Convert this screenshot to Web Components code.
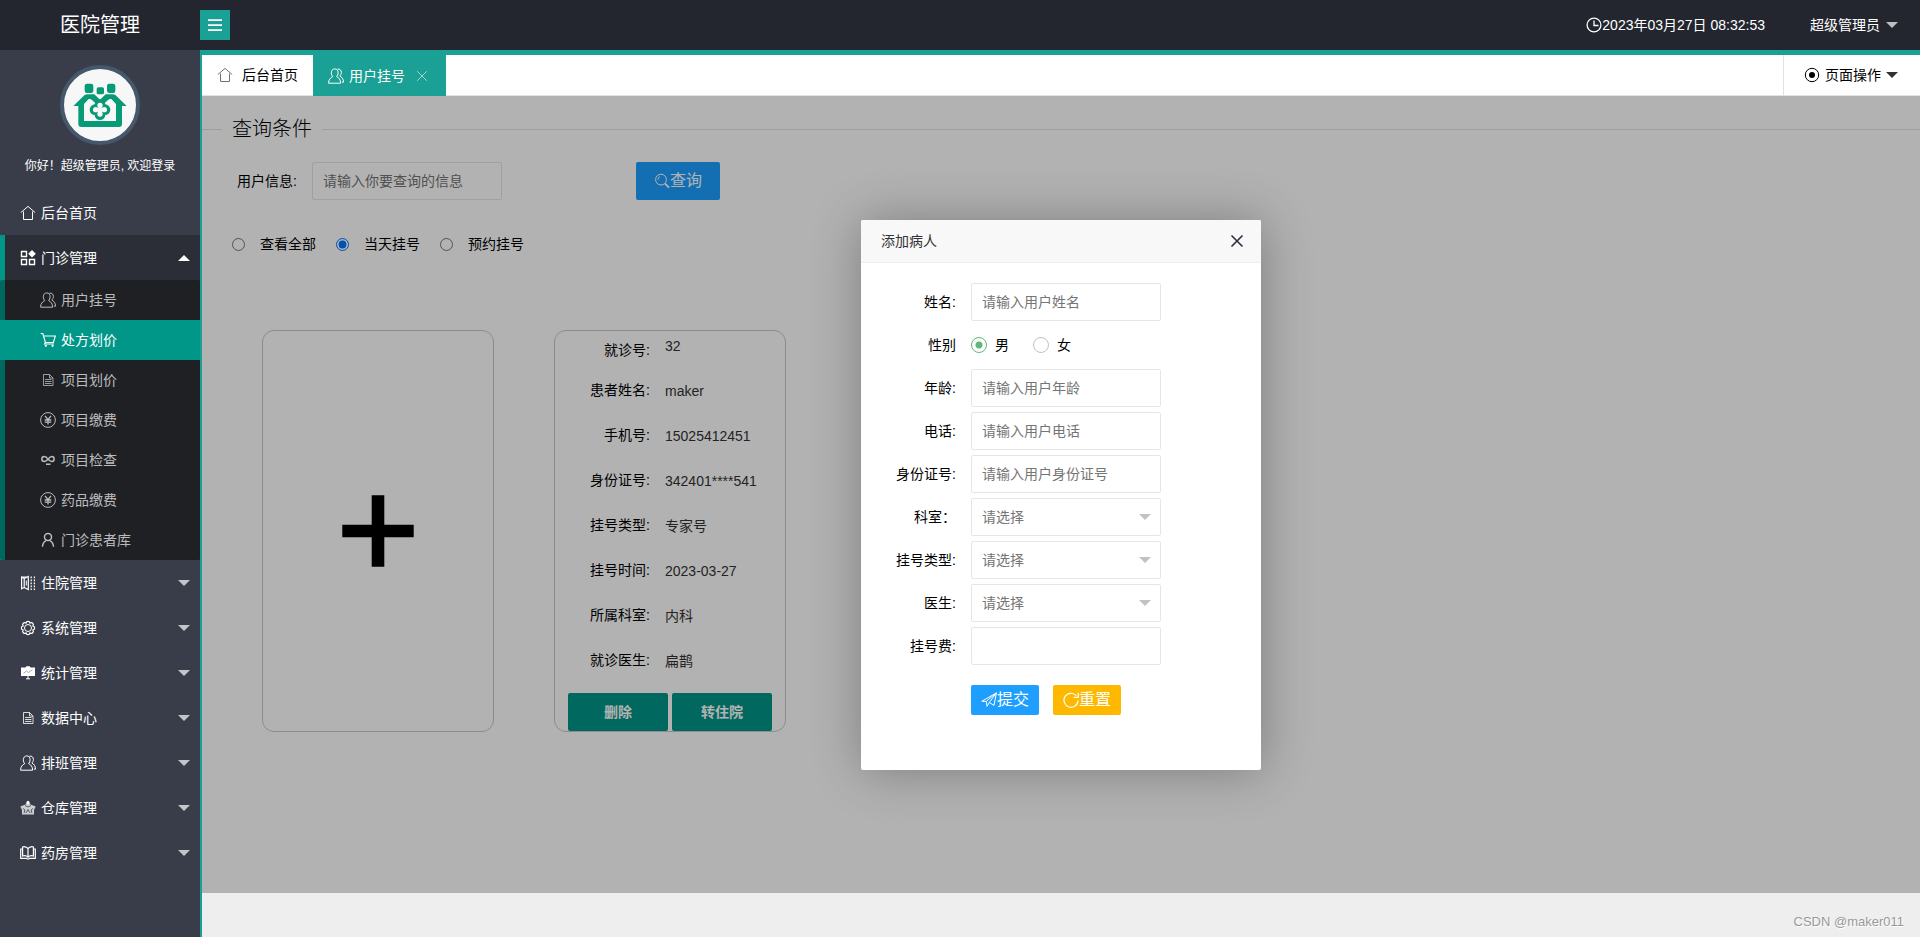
<!DOCTYPE html>
<html lang="zh-CN">
<head>
<meta charset="utf-8">
<title>医院管理</title>
<style>
  body {
    margin: 0;
    font: 14px/20px "Liberation Sans", "Noto Sans CJK SC", sans-serif;
    color: #000;
    background: #eee;
  }
</style>
</head>
<body>
<app-shell>
  <app-header slot="header"></app-header>
  <side-nav slot="nav">
    <nav-item icon="home" label="后台首页" leaf></nav-item>
    <nav-item icon="apps" label="门诊管理" open>
      <nav-link icon="users" label="用户挂号"></nav-link>
      <nav-link icon="cart" label="处方划价" current></nav-link>
      <nav-link icon="doc" label="项目划价"></nav-link>
      <nav-link icon="yen" label="项目缴费"></nav-link>
      <nav-link icon="infinity" label="项目检查"></nav-link>
      <nav-link icon="yen" label="药品缴费"></nav-link>
      <nav-link icon="user" label="门诊患者库"></nav-link>
    </nav-item>
    <nav-item icon="ward" label="住院管理"></nav-item>
    <nav-item icon="gear" label="系统管理"></nav-item>
    <nav-item icon="board" label="统计管理"></nav-item>
    <nav-item icon="doc" label="数据中心"></nav-item>
    <nav-item icon="users" label="排班管理"></nav-item>
    <nav-item icon="store" label="仓库管理"></nav-item>
    <nav-item icon="book" label="药房管理"></nav-item>
  </side-nav>
  <tab-bar slot="tabs"></tab-bar>
  <register-page>
    <add-card></add-card>
    <patient-card></patient-card>
    <modal-dialog slot="dialog" heading="添加病人">
      <form-field label="姓名:" placeholder="请输入用户姓名"></form-field>
      <gender-field></gender-field>
      <form-field label="年龄:" placeholder="请输入用户年龄"></form-field>
      <form-field label="电话:" placeholder="请输入用户电话"></form-field>
      <form-field label="身份证号:" placeholder="请输入用户身份证号"></form-field>
      <form-field label="科室：" kind="select"></form-field>
      <form-field label="挂号类型:" kind="select"></form-field>
      <form-field label="医生:" kind="select"></form-field>
      <form-field label="挂号费:"></form-field>
      <color-button slot="actions" icon="send" tone="blue" small>提交</color-button>
      <color-button slot="actions" icon="refresh" tone="amber" small>重置</color-button>
    </modal-dialog>
  </register-page>
</app-shell>

<script>
const define = (name, render, after) => customElements.define(name, class extends HTMLElement {
  connectedCallback() {
    if (this.shadowRoot) return;
    const root = this.attachShadow({ mode: 'open' });
    root.innerHTML = '<style>:host,*{box-sizing:border-box}</style>' + render(this);
    if (after) after(root, this);
  }
});

const ICONS = {
  home: '<path d="M.8 7.600 8 1.400l7.200 6.200M3.500 6.500V14.500H12.500V6.500"/>',
  apps: '<path d="M1.500 1.500h5v5h-5zM1.500 9.500h5v5h-5zM9.500 9.500h5v5h-5z" stroke-width="1.400"/><path d="M12 0l3.800 3.800L12 7.600 8.200 3.800z" fill="currentColor" stroke="none"/>',
  users: '<path d="M6.800.9C4.600.9 3.300 2.700 3.300 4.800c0 1.600.6 2.900 1.500 3.800C2.400 9.700.6 11.700.6 15.200H12.600c0-3.500-1.600-5.500-4-6.600.9-.9 1.500-2.200 1.500-3.800C10.100 2.700 9 .9 6.800.9z"/><path d="M9.400 1.200c2.500-.6 4 1.100 4 3.300 0 1.500-.7 2.700-1.600 3.500 2.300 1.200 3.600 3 3.700 6.200h-1.600"/>',
  cart: '<path d="M.6 1.500h2.200L5.400 10.500h8L15.300 4H3.700M5.400 10.500l-.8 1.500H14" stroke-width="1.200"/><circle cx="5.800" cy="13.800" r="1.100" fill="currentColor" stroke="none"/><circle cx="12.600" cy="13.800" r="1.100" fill="currentColor" stroke="none"/>',
  doc: '<g opacity=".8"><path d="M3.500 2.500h6l3.500 3.500v7.500H3.500zM9.500 2.500v3.500H13M5 7.500h6.500M5 9.500h6.500M5 11.500h6.500"/></g>',
  yen: '<circle cx="8" cy="8" r="7.400"/><path d="M5 3.800 8 7.600l3-3.800M4.700 8h6.600M4.700 10.200h6.600M8 7.600v5" stroke-width="1.300"/>',
  infinity: '<path d="M8 7.300C6.500 4.800 5.600 4.600 4.300 4.600a2.400 2.400 0 0 0 0 4.900C5.700 9.500 6.800 8.700 8 7.300S10.300 4.600 11.700 4.600a2.400 2.400 0 0 1 0 4.900C10.400 9.500 9.500 8.800 8 7.300zM6 12.200h4.500" stroke-width="1.500"/>',
  user: '<circle cx="8" cy="4.900" r="3.500" stroke-width="1.500"/><path d="M6.400 8.400C3.800 9.600 2.600 11.600 2.500 14.800M9.600 8.400c2.400 1.200 3.700 3.200 3.900 6.400" stroke-width="1.500"/>',
  ward: '<path d="M1.600 2 4.200 3.500v9L1.600 13.800zM4.200 3.500 8.300 1.500v13L4.200 12.500M1.600 2H8" stroke-width="1.200"/><path d="M6.300 5.500v5"/><path d="M11.200 1.500v13.500M14.400 1.500v13.500" stroke-dasharray="1.800 1.200" stroke-width="1.300"/>',
  gear: '<circle cx="8" cy="8" r="3.500"/><path d="M12.900 5.970A2.050 2.050 0 0 1 12.900 10.030 2.050 2.050 0 0 1 10.030 12.900 2.050 2.050 0 0 1 5.970 12.900 2.050 2.050 0 0 1 3.100 10.030 2.050 2.050 0 0 1 3.100 5.970 2.050 2.050 0 0 1 5.970 3.100 2.050 2.050 0 0 1 10.030 3.100 2.050 2.050 0 0 1 12.900 5.970z" stroke-width="1.200"/>',
  board: '<path d="M1 2.500h4.500l.8-1.200h3.400l.8 1.200H15v8.500H1z" fill="currentColor" stroke="none"/><path d="M8 11v3M6 13.800h4"/><path d="M3.500 8.300 6.500 6l2 1.500 4-2.800" stroke="#9a9da5" stroke-width=".9"/>',
  store: '<path d="M8 .5l2.500 4L15.700 6.500 14 10v4.500H2V10L.3 6.500 5.500 4.500z" fill="currentColor" opacity=".75" stroke="none"/><circle cx="8" cy="2.500" r="1.500" fill="currentColor" stroke="none"/><path d="M5 5.500 8 7l3-1.500M3 8.500l2 1.500-1 3M13 8.500 11 10l1 3M6 13l2-3.500 2 3.500" stroke="#393d49" stroke-width=".8"/>',
  book: '<path d="M8 3.600v8M8 3.600C6.400 1.300 3.500 1.600 2.600 2v9c1.600-.5 4-.3 5.400 1 1.400-1.300 3.800-1.500 5.400-1V2C12.500 1.600 9.600 1.300 8 3.600zM2.600 4H.7v9.400h6.100c.4.800 2 .8 2.400 0h6.100V4h-1.900" stroke-width="1.200"/>',
  clock: '<circle cx="8" cy="8" r="6.900" stroke-width="1.300"/><path d="M8 3.500V8.500h4.500" stroke-width="1.300"/>',
  target: '<circle cx="8" cy="8" r="6.700"/><circle cx="8" cy="8" r="3" fill="currentColor" stroke="none"/>',
  close: '<path d="M2.500 2.500l11 11M13.500 2.500l-11 11"/>',
  search: '<circle cx="7" cy="6.600" r="5.400"/><path d="M11 10.600l4 4" stroke-width="2"/><path d="M4 6.800c0-1.500.7-2.700 2-3.200"/>',
  send: '<path d="M.8 9.300 15.400.9 13 13.400 8.300 10.500 6 14.400 5.300 9.400zM15.400.9 5.300 9.400M15.400.9 8.300 10.500"/>',
  refresh: '<path d="M13.300 3.700A7 7 0 1 0 15 8.400M15.200.8v4.600h-4.600" stroke-width="1.200"/>',
  menu: '<path d="M1 3.200h14M1 8.200h14M1 13.200h14" stroke-width="1.800"/>',
  plus: '<path d="M8 1.200v13.600M1.200 8h13.600" stroke-width="2.400"/>'
};

define('ui-icon', el => `<style>
  :host{display:inline-flex;flex:none;width:var(--size,16px);height:var(--size,16px)}
  svg{width:100%;height:100%;fill:none;stroke:currentColor;stroke-width:var(--stroke,1)}
</style><svg viewBox="0 0 16 16" aria-hidden="true">${ICONS[el.getAttribute('name')]}</svg>`);

define('ui-caret', el => `<style>
  :host{display:block;flex:none;border:6px solid transparent;border-top-color:currentColor;border-bottom-width:0}
  :host([up]){border-top-width:0;border-bottom:6px solid currentColor}
</style>`);

define('app-shell', () => `<style>
  :host{display:grid;grid-template:50px 1fr / 200px 1fr;min-height:100vh}
  header{grid-column:1 / -1}
  nav{background:#393d49}
  main{display:flex;flex-direction:column;border-left:2px solid #1aa094;border-top:5px solid #1aa094;min-width:0}
  .page{flex:1;display:flex;background:#fff}
  footer{display:flex;align-items:center;justify-content:flex-end;height:44px;padding:14px 16px 0 0;background:#eee;
    font-size:13px;color:#999;text-shadow:1px 1px 0 #fff}
</style>
<header><slot name="header"></slot></header>
<nav><slot name="nav"></slot></nav>
<main><slot name="tabs"></slot><div class="page"><slot></slot></div><footer>CSDN @maker011</footer></main>`);

define('app-header', () => `<style>
  :host{display:flex;align-items:center;height:50px;background:#23262e;color:#fff}
  h1{width:200px;margin:0;font-size:20px;font-weight:400;line-height:50px;text-align:center}
  .menu{display:flex;align-items:center;justify-content:center;width:30px;height:30px;padding:0;border:0;background:#1aa094;color:#fff}
  time{display:flex;align-items:center;margin-left:auto}
  .account{display:flex;align-items:center;gap:6px;margin:0 22px 0 45px;color:#fff;text-decoration:none}
  ui-caret{color:#bdbec0}
</style>
<h1>医院管理</h1>
<button class="menu" aria-label="收起菜单"><ui-icon name="menu"></ui-icon></button>
<time><ui-icon name="clock"></ui-icon>2023年03月27日 08:32:53</time>
<a class="account" href="#account">超级管理员<ui-caret></ui-caret></a>`);

define('side-nav', () => `<style>
  :host{display:block;color:#fff}
  .profile{display:flex;flex-direction:column;align-items:center;gap:11px;padding:15px 0 14px}
  .avatar{width:80px;height:80px;border:4px solid #44576b;border-radius:50%;background:#f7f7f7}
  p{margin:0;font-size:12px}
</style>
<div class="profile">
  <svg class="avatar" viewBox="192 207 216 216" role="img" aria-label="医院标志">
    <g fill="#079a76">
      <rect x="254" y="251" width="26" height="28" rx="7"/><rect x="290" y="262" width="22" height="21" rx="5"/><rect x="321" y="251" width="25" height="28" rx="7"/>
      <path d="M220 318L253 286Q257 283 263 283H283L300 299 317 283H337Q343 283 347 286L380 318H366V372Q366 381 357 381H244Q235 381 235 372V318Z"/>
    </g>
    <path fill="#f7f7f7" d="M252 363V312L266 297Q272 296 276 300L300 322 324 300Q328 296 334 297L348 312V363Z"/>
    <g fill="#079a76"><circle cx="300" cy="314" r="16"/><circle cx="300" cy="344" r="16"/><circle cx="285" cy="329" r="16"/><circle cx="315" cy="329" r="16"/></g>
    <g fill="#f7f7f7"><circle cx="300" cy="316" r="8"/><circle cx="300" cy="342" r="8"/><circle cx="287" cy="329" r="8"/><circle cx="313" cy="329" r="8"/><rect x="293" y="322" width="14" height="14"/></g>
  </svg>
  <p>你好！超级管理员, 欢迎登录</p>
</div>
<slot></slot>`);

define('nav-item', el => `<style>
  :host{display:block}
  a{display:flex;align-items:center;gap:5px;height:45px;padding:0 10px 0 20px;color:#fff;text-decoration:none}
  ui-caret{margin-left:auto;color:#c4c5c8}
  :host([open]){background:#2b2e37;border-left:5px solid #009688}
  :host([open]) a{padding-left:15px}
  :host([open]) ui-caret{color:#fff}
  .sub{margin-left:-5px;background:linear-gradient(90deg,#00695f 5px,#1f2024 5px);border-radius:2px}
</style>
<a href="#"><ui-icon name="${el.getAttribute('icon')}"></ui-icon>${el.getAttribute('label')}${
  el.hasAttribute('leaf') ? '' : `<ui-caret ${el.hasAttribute('open') ? 'up' : ''}></ui-caret>`}</a>
<div class="sub"><slot></slot></div>`);

define('nav-link', el => `<style>
  :host{display:block}
  a{display:flex;align-items:center;gap:5px;height:40px;padding-left:40px;color:#bcbcbd;text-decoration:none}
  :host([current]) a{background:#009688;color:#fff}
</style>
<a href="#"><ui-icon name="${el.getAttribute('icon')}"></ui-icon>${el.getAttribute('label')}</a>`);

define('tab-bar', () => `<style>
  :host{display:flex;height:41px;background:#fff;border-bottom:1px solid #e2e2e2}
  a{display:flex;align-items:center;height:41px;padding:0 15px;color:#000;text-decoration:none}
  .home{gap:9px;height:40px}
  .home ui-icon{color:#6c7280}
  .active{gap:5px;background:#1aa094;color:#fff}
  .active button{display:flex;margin:0 2px 0 5px;padding:0;border:0;background:none;color:#b9d9d6;--size:14px}
  .ops{gap:5px;height:40px;margin-left:auto;padding:0 22px 0 20px;border-left:1px solid #e2e2e2}
  .ops ui-caret{color:#333}
</style>
<a class="home" href="#home"><ui-icon name="home"></ui-icon>后台首页</a>
<a class="active" href="#register"><ui-icon name="users"></ui-icon>用户挂号<button aria-label="关闭"><ui-icon name="close"></ui-icon></button></a>
<a class="ops" href="#ops"><ui-icon name="target"></ui-icon>页面操作<ui-caret></ui-caret></a>`);

define('color-button', el => `<style>
  :host{display:block}
  button{display:flex;align-items:center;justify-content:center;height:38px;width:100%;padding:0 18px;border:0;border-radius:2px;
    font:inherit;font-size:16px;color:#fff;background:#1e9fff;white-space:nowrap}
  :host([tone=amber]) button{background:#ffb800}
  :host([tone=teal]) button{background:#009688;font-size:14px;font-weight:700}
  :host([small]) button{height:30px;padding:0 10px}
</style>
<button type="button">${el.hasAttribute('icon') ? `<ui-icon name="${el.getAttribute('icon')}"></ui-icon>` : ''}<slot></slot></button>`);

define('register-page', () => `<style>
  :host{display:block;flex:1;position:relative}
  fieldset{margin:18px 0 0;padding:0;border:0;border-top:1px solid #e2e2e2;min-width:0}
  legend{margin-left:20px;padding:0 10px;font-size:20px;line-height:30px;font-weight:300}
  .query{display:flex;align-items:center;margin-top:18px}
  .query label{width:110px;padding-right:15px;text-align:right}
  .query input{width:190px;height:38px;margin-right:134px;padding:0 10px;border:1px solid #e6e6e6;border-radius:2px;font:inherit;background:#fff}
  ::placeholder{color:#757575;opacity:1}
  .filter{display:flex;gap:20px;padding:34px 30px 0}
  .filter label{display:flex;align-items:center;gap:15px}
  .filter input{width:13px;height:13px;margin:0}
  .cards{display:flex;flex-wrap:wrap;gap:60px;padding:76px 60px}
  .mask{position:absolute;inset:0;display:flex;align-items:center;justify-content:center;background:rgba(0,0,0,.3)}
</style>
<fieldset>
  <legend>查询条件</legend>
  <div class="query">
    <label for="q">用户信息:</label><input id="q" placeholder="请输入你要查询的信息">
    <color-button icon="search" tone="blue">查询</color-button>
  </div>
  <div class="filter">
    <label><input type="radio" name="range">查看全部</label>
    <label><input type="radio" name="range" checked>当天挂号</label>
    <label><input type="radio" name="range">预约挂号</label>
  </div>
</fieldset>
<div class="cards"><slot></slot></div>
<div class="mask"><slot name="dialog"></slot></div>`);

const CARD = `:host{display:flex;flex-direction:column;width:232px;min-height:402px;border:1px solid #c9c9c9;border-radius:12px}`;

define('add-card', () => `<style>${CARD}
  button{display:flex;flex:1;align-items:center;justify-content:center;border:0;background:none;color:#000;--size:84px}
</style>
<button aria-label="添加病人"><ui-icon name="plus"></ui-icon></button>`);

const PATIENT = [['就诊号:', '32'], ['患者姓名:', 'maker'], ['手机号:', '15025412451'], ['身份证号:', '342401****541'],
  ['挂号类型:', '专家号'], ['挂号时间:', '2023-03-27'], ['所属科室:', '内科'], ['就诊医生:', '扁鹊']];

define('patient-card', () => `<style>${CARD}
  dl{margin:0}
  dl div{display:flex;align-items:flex-start;gap:15px;line-height:45px}
  dt{width:95px;text-align:right;line-height:43px}
  dd{margin:0;color:#333}
  div:first-child dt{line-height:38px}
  div:first-child dd{line-height:30px}
  .actions{display:grid;grid-template-columns:1fr 1fr;gap:4px;margin:9px 13px 0}
</style>
<dl>${PATIENT.map(([k, v]) => `<div><dt>${k}</dt><dd>${v}</dd></div>`).join('')}</dl>
<div class="actions"><color-button tone="teal">删除</color-button><color-button tone="teal">转住院</color-button></div>`);

define('modal-dialog', el => `<style>
  :host{display:flex;flex-direction:column;width:400px;min-height:550px;background:#fff;border-radius:2px;box-shadow:1px 1px 50px rgba(0,0,0,.3)}
  header{display:flex;align-items:center;justify-content:space-between;height:43px;padding:0 16px 0 20px;border-bottom:1px solid #eee;background:#f8f8f8;border-radius:2px 2px 0 0}
  h2{margin:0;font-size:14px;font-weight:400;color:#333}
  header button{display:flex;padding:0;border:0;background:none;color:#2e2d3c;--stroke:1.6}
  form{display:grid;gap:5px;padding:20px 0 0}
  .actions{display:flex;gap:14px;padding:15px 0 0 110px}
</style>
<header><h2>${el.getAttribute('heading')}</h2><button aria-label="关闭"><ui-icon name="close"></ui-icon></button></header>
<form><slot></slot><div class="actions"><slot name="actions"></slot></div></form>`);

const FIELD = `:host{display:flex;align-items:center;height:38px}
  .name{width:110px;padding-right:15px;text-align:right}`;

define('form-field', el => `<style>${FIELD}
  .box{position:relative;width:190px}
  input,select{display:block;width:100%;height:38px;padding:0 10px;border:1px solid #e6e6e6;border-radius:2px;background:#fff;font:inherit;appearance:none}
  select,::placeholder{color:#757575;opacity:1}
  ui-caret{position:absolute;right:10px;top:16px;color:#c2c2c2;pointer-events:none}
</style>
<label class="name" for="f">${el.getAttribute('label')}</label>
<div class="box">${el.getAttribute('kind') === 'select'
  ? '<select id="f"><option>请选择</option></select><ui-caret></ui-caret>'
  : `<input id="f" placeholder="${el.getAttribute('placeholder') || ''}">`}</div>`);

define('gender-field', () => `<style>${FIELD}
  .choices{display:flex;gap:24px}
  .choices label{display:flex;align-items:center;gap:8px}
  input{appearance:none;width:16px;height:16px;margin:0;border:1px solid #c2c2c2;border-radius:50%}
  input:checked{border-color:#5fb878;background:radial-gradient(circle,#5fb878 3px,transparent 4px)}
</style>
<span class="name" id="n">性别</span>
<div class="choices" role="radiogroup" aria-labelledby="n">
  <label><input type="radio" name="g" checked>男</label>
  <label><input type="radio" name="g">女</label>
</div>`);
</script>
</body>
</html>
